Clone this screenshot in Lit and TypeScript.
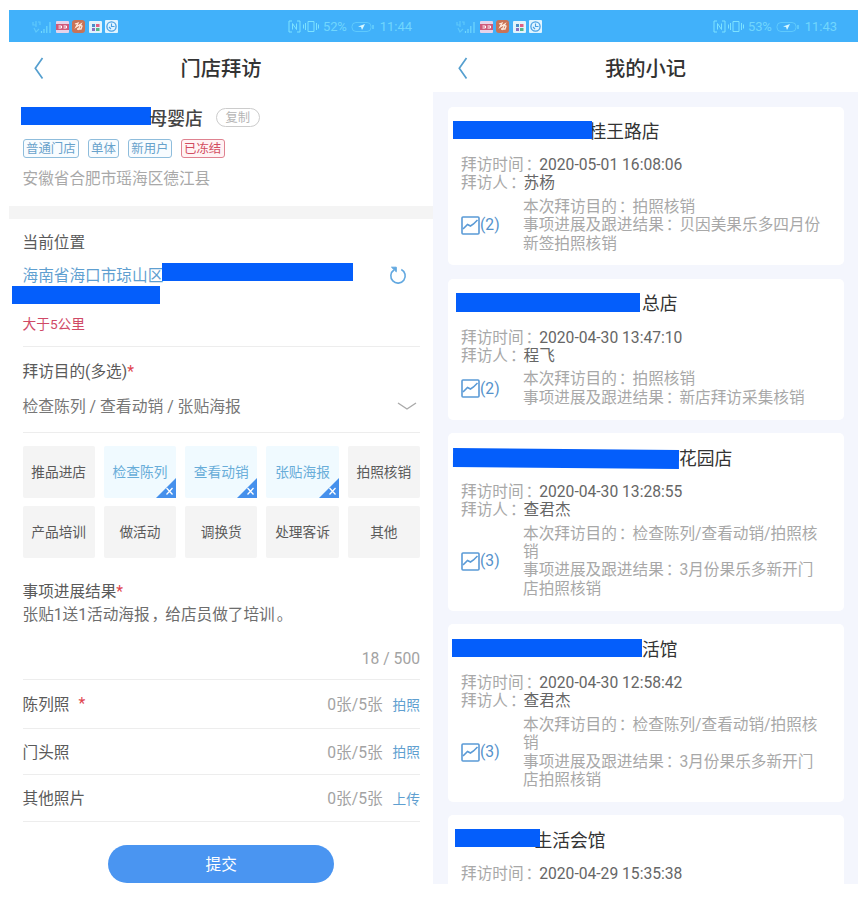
import { LitElement, html, css, svg } from "lit";
import { customElement, property } from "lit/decorators.js";
import { styleMap } from "lit/directives/style-map.js";
import { classMap } from "lit/directives/class-map.js";

const widthOf = (w: number) => styleMap({ width: `${w}px` });

/** Solid bar that hides part of a name or address. */
@customElement("mask-bar")
class MaskBar extends LitElement {
  @property({ type: Number }) w = 100;
  static styles = css`
    :host { display: block; flex: none; }
    .bar { height: 18.5px; background: #045efb; }
  `;
  render() {
    return html`<div class="bar" style=${widthOf(this.w)}></div>`;
  }
}

@customElement("phone-header")
class PhoneHeader extends LitElement {
  @property() heading = "";
  @property() battery = "";
  @property() clock = "";
  static styles = css`
    :host { display: block; flex: none; }
    .status {
      box-sizing: border-box;
      height: 32px;
      padding: 1px 21px 0 23px;
      display: flex;
      align-items: center;
      justify-content: space-between;
      background: #41b1fa;
      color: #70d6fd;
      font-size: 13px;
      letter-spacing: -0.2px;
    }
    .group { display: flex; align-items: center; }
    .left { gap: 3.5px; }
    .clock { margin-left: 5px; letter-spacing: 0; }
    .pct { margin: 0 4px 0 2px; }
    svg { display: block; flex: none; }
    .nav {
      height: 50px;
      display: grid;
      grid-template-columns: 60px 1fr 60px;
      align-items: center;
      text-align: center;
      background: #fff;
    }
    .back { margin-left: 23.5px; margin-top: 1px; }
    .heading { font-size: 20.3px; font-weight: 500; color: #333; }
  `;
  render() {
    return html`
      <div class="status">
        <div class="group left">
          <svg width="20" height="14" viewBox="0 0 20 14" fill="none" stroke="#7ce2ff" stroke-width="1.2" opacity=".8">
            <path d="M1 2v3h3M4 1v6M6 2h2v3M2 8l2 4 3-3" opacity=".6" />
            <path d="M9.5 13v-2M12 13V9M14.8 13V6M18 13V2" />
          </svg>
          <svg width="13" height="12" viewBox="0 0 13 12">
            <rect width="13" height="12" rx="1" fill="#e6d3ea" />
            <rect y="3" width="13" height="6" fill="#cf5a7a" />
            <path d="M2.500 5h3v2h-3M7.500 5h3v2h-3" stroke="#fff" fill="none" />
          </svg>
          <svg width="13" height="13" viewBox="0 0 13 13">
            <rect width="13" height="13" rx="3" fill="#c87357" />
            <path d="M3 4l3-1-2 4 5-3-3 6M8 5l2 1-1 3H5" stroke="#ffe9dc" stroke-width="1.3" fill="none" />
          </svg>
          <svg width="13" height="12" viewBox="0 0 13 12">
            <rect width="13" height="12" rx="1" fill="#e2f3fb" />
            <rect x="3" y="3" width="3" height="3" fill="#4a8dc8" />
            <rect x="7" y="3" width="3.5" height="3" fill="#e05f84" />
            <rect x="3" y="7" width="3" height="3" fill="#8b6ec0" />
            <rect x="7" y="7" width="3.5" height="3" fill="#55b58b" />
          </svg>
          <svg width="13" height="13" viewBox="0 0 13 13" fill="none">
            <rect width="13" height="13" rx="1" fill="#dff4ff" />
            <circle cx="6.5" cy="6.5" r="4.6" stroke="#4aa0e4" stroke-width="1.3" />
            <path d="M6.500 3.500v3h3M4 7l2 2" stroke="#4aa0e4" stroke-width="1.1" />
          </svg>
        </div>
        <div class="group">
          <svg width="13" height="13" viewBox="0 0 13 13" fill="none" stroke="#7ce2ff">
            <path d="M4 1H1v11h3M9 1h3v11H9M4.500 9.500v-6l4 6v-6" />
          </svg>
          <svg width="20" height="13" viewBox="0 0 20 13" fill="none" stroke="#7ce2ff">
            <path d="M7 1.500h6v10H7zM4.500 3v7M15.500 3v7M2.500 4.500v4M17.500 4.500v4" />
          </svg>
          <span class="pct">${this.battery}</span>
          <svg width="24" height="10" viewBox="0 0 24 10" fill="none">
            <rect x="1" y=".5" width="19" height="9" rx="4" stroke="#7ce2ff" opacity=".5" />
            <path d="M22 3v4" stroke="#7ce2ff" />
            <path d="M7 4.500l7-2.500-3 6-1-3z" fill="#d8f8ff" />
          </svg>
          <span class="clock">${this.clock}</span>
        </div>
      </div>
      <div class="nav">
        <svg class="back" width="12" height="24" viewBox="0 0 12 24" fill="none" stroke="#559fcf" stroke-width="1.7">
          <path d="M9.500 2L2.300 12.300l7.200 10.200" />
        </svg>
        <span class="heading">${this.heading}</span>
      </div>
    `;
  }
}

const tags = [
  { text: "普通门店", danger: false },
  { text: "单体", danger: false },
  { text: "新用户", danger: false },
  { text: "已冻结", danger: true },
];

const purposes = [
  { text: "推品进店", on: false },
  { text: "检查陈列", on: true },
  { text: "查看动销", on: true },
  { text: "张贴海报", on: true },
  { text: "拍照核销", on: false },
  { text: "产品培训", on: false },
  { text: "做活动", on: false },
  { text: "调换货", on: false },
  { text: "处理客诉", on: false },
  { text: "其他", on: false },
];

const photos = [
  { label: "陈列照", required: true, action: "拍照" },
  { label: "门头照", required: false, action: "拍照" },
  { label: "其他照片", required: false, action: "上传" },
];

@customElement("visit-form")
class VisitForm extends LitElement {
  static styles = css`
    :host {
      display: flex;
      flex-direction: column;
      width: 424px;
      background: #fff;
      color: #5a5a5a;
    }
    .row { display: flex; align-items: center; }
    .store { padding: 14px 12px 0; height: 114px; box-sizing: border-box; }
    .name { height: 23px; font-size: 17.800px; font-weight: 500; color: #444; }
    .name mask-bar { margin-top: -3px; }
    .label { margin: -2px 0 0 -1px; }
    .copy {
      margin-left: 13px;
      box-sizing: border-box;
      width: 44px;
      height: 19px;
      line-height: 18px;
      border: 1px solid #ccc;
      border-radius: 10px;
      text-align: center;
      font-size: 12.300px;
      font-weight: 400;
      color: #b5b5b5;
    }
    .tags { margin: 10px 0 0 1.500px; gap: 8.500px; }
    .tag {
      box-sizing: border-box;
      height: 19px;
      line-height: 18px;
      padding: 0 2.500px;
      border: 1px solid #8fbddc;
      border-radius: 3px;
      background: #f8fcff;
      font-size: 12.400px;
      color: #68a2cb;
    }
    .tag.danger { border-color: #df8290; background: #fff3f4; color: #d24c60; }
    .addr { margin: 9.500px 0 0 1.500px; line-height: 22px; color: #a9a9a9; }
    .band { height: 13px; background: #f4f4f4; }
    .body { padding: 0 13px 0 13.500px; }
    .location { height: 127.500px; box-sizing: border-box; padding-top: 13px; border-bottom: 1px solid #ededed; }
    .line { line-height: 22px; }
    .place { height: 22px; margin-top: 9.500px; color: #5f9fd0; }
    .place mask-bar { margin: -5px 0 0 -1.300px; }
    .refresh { margin: 0 13.500px 0 auto; }
    .second { margin-left: -10.500px; }
    .far { margin-top: 9px; line-height: 22px; font-size: 13.700px; color: #d04a66; }
    .goal { height: 86px; box-sizing: border-box; padding-top: 14px; border-bottom: 1px solid #ededed; }
    .picked { height: 22px; margin-top: 11.500px; justify-content: space-between; color: #777; font-size: 15.800px; }
    .picked svg { margin: 2px 3px 0 0; }
    .star { color: #e0454f; }
    .grid {
      display: grid;
      grid-template-columns: repeat(5, 1fr);
      grid-auto-rows: 52px;
      gap: 8px 9px;
      margin-top: 13.500px;
    }
    .tile {
      position: relative;
      box-sizing: border-box;
      padding-bottom: 2px;
      display: flex;
      align-items: center;
      justify-content: center;
      background: #f4f4f4;
      border-radius: 2px;
      font-size: 13.700px;
    }
    .tile.on { background: #f0faff; color: #68add9; }
    .corner { position: absolute; right: 0; bottom: 0; }
    .result { margin-top: 21.500px; height: 99px; border-bottom: 1px solid #ededed; line-height: 23.500px; }
    .result .text { color: #6d6d6d; }
    .nudge { padding-left: 2px; margin-right: -2px; }
    .count { margin-top: 20.500px; text-align: right; color: #a3a3a3; line-height: 24px; }
    .photo { height: 45.500px; border-bottom: 1px solid #ededed; }
    .photo.first { height: 48px; }
    .photo .star { margin-left: 9px; }
    .num { margin-left: auto; color: #a3a3a3; }
    .action { margin-left: 10px; font-size: 13.700px; color: #5f9fd0; }
    .submit {
      width: 226px;
      height: 38.500px;
      margin: 23px auto 0;
      border-radius: 20px;
      background: #4a95f1;
      color: #fff;
      display: flex;
      align-items: center;
      justify-content: center;
    }
  `;
  render() {
    return html`
      <phone-header heading="门店拜访" battery="52%" clock="11:44"></phone-header>
      <section class="store">
        <div class="row name">
          <mask-bar .w=${129.5}></mask-bar><span class="label">母婴店</span><span class="copy">复制</span>
        </div>
        <div class="row tags">
          ${tags.map((t) => html`<span class=${classMap({ tag: true, danger: t.danger })}>${t.text}</span>`)}
        </div>
        <div class="addr">安徽省合肥市瑶海区德江县</div>
      </section>
      <div class="band"></div>
      <div class="body">
        <section class="location">
          <div class="line">当前位置</div>
          <div class="row place">
            <span>海南省海口市琼山区</span><mask-bar .w=${191.5}></mask-bar>
            <svg class="refresh" width="18" height="20" viewBox="0 0 18 20" fill="none" stroke="#62a8e0" stroke-width="1.600">
              <path d="M12.300 4.500a7.200 7.200 0 1 1-7.400.5" />
              <path d="M2.500 2.200h4.800v4.600z" fill="#62a8e0" stroke-width="1" />
            </svg>
          </div>
          <mask-bar class="second" .w=${148}></mask-bar>
          <div class="far">大于5公里</div>
        </section>
        <section class="goal">
          <div class="line">拜访目的(多选)<span class="star">*</span></div>
          <div class="row picked">
            <span>检查陈列 / 查看动销 / 张贴海报</span>
            <svg width="20" height="9" viewBox="0 0 20 9" fill="none" stroke="#aaa" stroke-width="1.400">
              <path d="M1 1l9 6 9-6" />
            </svg>
          </div>
        </section>
        <div class="grid">
          ${purposes.map(
            (p) => html`<div class=${classMap({ tile: true, on: p.on })}>
              ${p.text}
              ${p.on
                ? html`<svg class="corner" width="20" height="20" viewBox="0 0 20 20">
                    ${svg`<path d="M20 0v20H0z" fill="#4590ec" />
                    <path d="M10.500 10l6 6.500M16.500 10l-6 6.500" stroke="#fff" stroke-width="1.300" />`}
                  </svg>`
                : null}
            </div>`
          )}
        </div>
        <section class="result">
          <div>事项进展结果<span class="star">*</span></div>
          <div class="text">张贴1送1活动海报<span class="nudge">，</span>给店员做了培训<span class="nudge">。</span></div>
          <div class="count">18 / 500</div>
        </section>
        ${photos.map(
          (p, i) => html`<div class=${classMap({ row: true, photo: true, first: i === 0 })}>
            <span>${p.label}</span>${p.required ? html`<span class="star">*</span>` : null}
            <span class="num">0张/5张</span><span class="action">${p.action}</span>
          </div>`
        )}
        <div class="submit">提交</div>
      </div>
    `;
  }
}

interface Visit {
  person: string;
  count: number;
  goal: string;
  result: string;
}

interface Note {
  mask: number;
  shift: number;
  lift?: number;
  tilt?: number;
  gap?: number;
  name: string;
  time: string;
  visit?: Visit;
}

const spring: Visit = { person: "查君杰", count: 3, goal: "检查陈列/查看动销/拍照核销", result: "3月份果乐多新开门店拍照核销" };

const notes: Note[] = [
  {
    mask: 138.5, shift: -8, gap: -3, name: "桂王路店", time: "2020-05-01 16:08:06",
    visit: { person: "苏杨", count: 2, goal: "拍照核销", result: "贝因美果乐多四月份新签拍照核销" },
  },
  {
    mask: 184, shift: -5.5, gap: 2.5, name: "总店", time: "2020-04-30 13:47:10",
    visit: { person: "程飞", count: 2, goal: "拍照核销", result: "新店拜访采集核销" },
  },
  { mask: 226, shift: -8, tilt: 0.5, lift: -2, name: "花园店", time: "2020-04-30 13:28:55", visit: spring },
  { mask: 190, shift: -9, lift: -4, name: "活馆", time: "2020-04-30 12:58:42", visit: spring },
  { mask: 84.5, shift: -6, lift: -6, gap: -5, name: "生活会馆", time: "2020-04-29 15:35:38" },
];

const colon = html`<span class="nudge">：</span>`;

@customElement("note-list")
class NoteList extends LitElement {
  static styles = css`
    :host {
      display: flex;
      flex-direction: column;
      width: 425px;
      background: #f4f6fd;
    }
    .list { flex: 1; display: flex; flex-direction: column; gap: 13.800px; padding: 14.500px 14px 0 14.500px; }
    .card {
      padding: 13px 0 12.300px 13.500px;
      background: #fff;
      border-radius: 5px;
      line-height: 18.400px;
      color: #a8a8a8;
    }
    .card:last-child { flex: 1; padding-bottom: 0; border-radius: 5px 5px 0 0; }
    .title {
      display: flex;
      align-items: center;
      height: 25px;
      margin-bottom: 11.500px;
      font-size: 17.800px;
      color: #333;
    }
    .title mask-bar { z-index: 1; }
    .value { color: #666; }
    .nudge { padding-left: 2px; margin-right: -2px; }
    .detail { display: flex; align-items: center; margin-top: 5px; }
    .pics { width: 62px; flex: none; display: flex; align-items: center; color: #5592cb; }
    .desc { width: 302px; }
  `;
  render() {
    return html`
      <phone-header heading="我的小记" battery="53%" clock="11:43"></phone-header>
      <div class="list">
        ${notes.map(
          (n) => html`<article class="card">
            <div class="title">
              <mask-bar
                .w=${n.mask}
                style=${styleMap({
                  marginLeft: `${n.shift}px`,
                  marginTop: `${n.lift ?? -4}px`,
                  marginRight: `${n.gap ?? 0}px`,
                  transform: n.tilt ? `rotate(${n.tilt}deg)` : "none",
                })}
              ></mask-bar>
              <span>${n.name}</span>
            </div>
            <div>拜访时间${colon}<span class="value">${n.time}</span></div>
            ${n.visit
              ? html`<div>拜访人${colon}<span class="value">${n.visit.person}</span></div>
                  <div class="detail">
                    <div class="pics">
                      <svg width="19" height="19" viewBox="0 0 19 19" fill="none" stroke="#5a9ad6" stroke-width="1.600">
                        <rect x="1" y="1" width="17" height="17" rx="1" />
                        <path d="M2 13l4.500-4.500 3 1.500 3-2 4-4" />
                      </svg>
                      <span>(${n.visit.count})</span>
                    </div>
                    <div class="desc">
                      <div>本次拜访目的${colon}${n.visit.goal}</div>
                      <div>事项进展及跟进结果${colon}${n.visit.result}</div>
                    </div>
                  </div>`
              : null}
          </article>`
        )}
      </div>
    `;
  }
}

@customElement("app-root")
class AppRoot extends LitElement {
  static styles = css`
    :host {
      display: block;
      box-sizing: border-box;
      width: 865px;
      height: 924px;
      padding: 10px 0 0 9px;
      background: #fff;
      overflow: hidden;
      font-family: Roboto, "Noto Sans CJK SC", sans-serif;
      font-size: 15.650px;
    }
    .screens { display: flex; width: 849px; height: 874px; overflow: hidden; }
  `;
  render() {
    return html`<div class="screens"><visit-form></visit-form><note-list></note-list></div>`;
  }
}
